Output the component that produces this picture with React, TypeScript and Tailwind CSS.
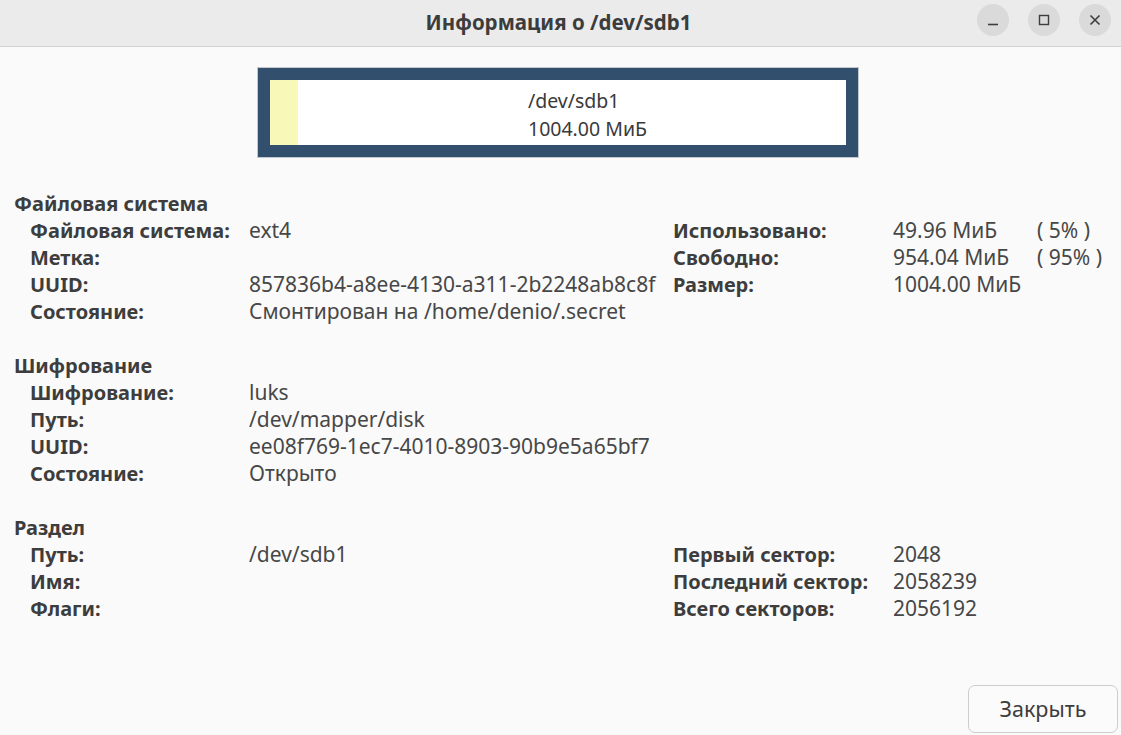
import React from "react";

type Row = [string, string, string?, string?, string?];

const font = { fontFamily: '"Noto Sans", "Open Sans", sans-serif' };

function Section({ title, rows }: { title: string; rows: Row[] }) {
  return (
    <div className="flex flex-col">
      <div className="h-[27px] leading-[27px] pl-[14px] font-bold text-[#3d3d3d]">{title}</div>
      <div className="grid grid-cols-[219px_424px_220px_144px_1fr] pl-[30px]">
        {rows.map((r, i) => (
          <React.Fragment key={i}>
            <div className="h-[27px] leading-[27px] font-bold text-[#3d3d3d] whitespace-nowrap">{r[0]}</div>
            <div className="h-[27px] leading-[27px] text-[21px] text-[#474747] whitespace-nowrap">{r[1]}</div>
            <div className="h-[27px] leading-[27px] font-bold text-[#3d3d3d] whitespace-nowrap">{r[2] ?? ""}</div>
            <div className="h-[27px] leading-[27px] text-[21px] text-[#474747] whitespace-nowrap">{r[3] ?? ""}</div>
            <div className="h-[27px] leading-[27px] text-[21px] text-[#474747] whitespace-nowrap">{r[4] ?? ""}</div>
          </React.Fragment>
        ))}
      </div>
    </div>
  );
}

export default function App() {
  return (
    <div className="w-[1121px] h-[735px] bg-[#fafafa] flex flex-col text-[20px]" style={font}>
      <div className="h-[47px] shrink-0 bg-[#ebebeb] border-b border-[#d2d2d2] relative flex items-center justify-center">
        <div className="font-bold text-[#3c3c3c] text-[20.5px] -mt-[2px] -ml-[4px]">Информация о /dev/sdb1</div>
        <div className="absolute right-[10px] top-[4px] flex gap-[19px]">
          <div className="w-[32px] h-[32px] rounded-full bg-[#dadada] flex items-center justify-center">
            <svg width="12" height="12" viewBox="0 0 12 12"><path d="M1 10.5h10" stroke="#3d3d3d" strokeWidth="1.6" /></svg>
          </div>
          <div className="w-[32px] h-[32px] rounded-full bg-[#dadada] flex items-center justify-center">
            <svg width="12" height="12" viewBox="0 0 12 12"><rect x="1.5" y="1.5" width="9" height="9" fill="none" stroke="#3d3d3d" strokeWidth="1.4" /></svg>
          </div>
          <div className="w-[32px] h-[32px] rounded-full bg-[#dadada] flex items-center justify-center">
            <svg width="12" height="12" viewBox="0 0 12 12"><path d="M1.5 1.5l9 9M10.5 1.5l-9 9" stroke="#3d3d3d" strokeWidth="1.6" /></svg>
          </div>
        </div>
      </div>

      <div className="mt-[20px] ml-[257px] w-[602px] h-[91px] border border-[#c4c8cc] bg-[#334f6e] p-[12px]">
        <div className="w-full h-full bg-white flex">
          <div className="w-[28px] h-full bg-[#f8f8b8]" />
          <div className="flex flex-col justify-center pt-[4px] pl-[230px] text-[#3a3a3a] leading-[28px] text-[19.5px]">
            <div>/dev/sdb1</div>
            <div>1004.00 МиБ</div>
          </div>
        </div>
      </div>

      <div className="mt-[32px] flex flex-col gap-[27px]">
        <Section
          title="Файловая система"
          rows={[
            ["Файловая система:", "ext4", "Использовано:", "49.96 МиБ", "( 5% )"],
            ["Метка:", "", "Свободно:", "954.04 МиБ", "( 95% )"],
            ["UUID:", "857836b4-a8ee-4130-a311-2b2248ab8c8f", "Размер:", "1004.00 МиБ"],
            ["Состояние:", "Смонтирован на /home/denio/.secret"],
          ]}
        />
        <Section
          title="Шифрование"
          rows={[
            ["Шифрование:", "luks"],
            ["Путь:", "/dev/mapper/disk"],
            ["UUID:", "ee08f769-1ec7-4010-8903-90b9e5a65bf7"],
            ["Состояние:", "Открыто"],
          ]}
        />
        <Section
          title="Раздел"
          rows={[
            ["Путь:", "/dev/sdb1", "Первый сектор:", "2048"],
            ["Имя:", "", "Последний сектор:", "2058239"],
            ["Флаги:", "", "Всего секторов:", "2056192"],
          ]}
        />
      </div>

      <div className="mt-auto flex justify-end pr-[3px] pb-[2px]">
        <button className="w-[150px] h-[48px] rounded-[7px] border border-[#cdcdcd] bg-[#fbfbfb] text-[#3d3d3d] text-[21.5px]" style={font}>
          Закрыть
        </button>
      </div>
    </div>
  );
}
